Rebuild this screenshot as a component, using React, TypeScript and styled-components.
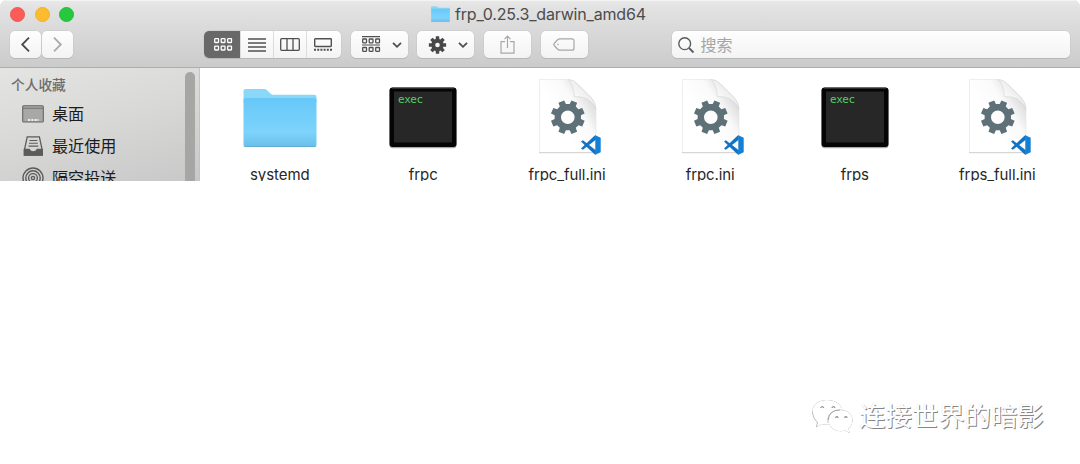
import React from 'react';
import styled, { createGlobalStyle } from 'styled-components';

const GlobalStyle = createGlobalStyle`
  * { box-sizing: border-box; }
  body { margin: 0; background: #fff; }
  svg { display: block; flex: none; overflow: visible; }
`;

const Page = styled.main`
  position: relative;
  width: 1080px;
  height: 464px;
  overflow: hidden;
  background: #fff;
  font-family: Inter, 'Noto Sans CJK SC', sans-serif;
`;
const Window = styled.section`
  height: 181px;
  overflow: hidden;
  border-radius: 6px 6px 0 0;
`;
const Header = styled.header`
  height: 68px;
  background: linear-gradient(#e9e9e9, #e2e2e2 8px, #cbcbcb);
  border-bottom: 1px solid #aeaeae;
  box-shadow: inset 0 1px #f3f3f3;
`;
const TitleBar = styled.div`
  display: grid;
  grid-template-columns: 431px 1fr;
  align-items: center;
  height: 31px;
  padding-bottom: 3px;
`;
const Lights = styled.div`
  display: flex;
  gap: 9.5px;
  padding-left: 10px;
`;
const Light = styled.i<{ $color: string; $edge: string }>`
  width: 15px;
  height: 15px;
  border-radius: 50%;
  background: ${p => p.$color};
  border: 1px solid ${p => p.$edge};
`;
const Title = styled.div`
  display: flex;
  align-items: center;
  gap: 5px;
  color: #4c4c4c;
  font-size: 16px;
  line-height: 20px;
  white-space: nowrap;
`;
const TitleText = styled.span`
  letter-spacing: -0.18px;
`;
const Toolbar = styled.div`
  display: flex;
  height: 27px;
  padding-left: 10px;
`;
const Button = styled.div<{ $w: number; $ml?: number }>`
  display: flex;
  align-items: center;
  justify-content: center;
  flex: none;
  width: ${p => p.$w}px;
  height: 27px;
  margin-left: ${p => p.$ml ?? 0}px;
  border-radius: 5px;
  background: linear-gradient(#fefefe, #f3f3f3);
  box-shadow: 0 0 0 0.5px #c6c6c6, 0 1px 0.5px #aaa;
`;
const MenuButton = styled(Button)`
  gap: 12px;
  padding-left: 5px;
`;
const Segments = styled(Button)`
  justify-content: flex-start;
  overflow: hidden;
`;
const Segment = styled.div<{ $w: number; $on?: boolean }>`
  display: flex;
  align-items: center;
  justify-content: center;
  width: ${p => p.$w}px;
  height: 27px;
  padding-left: ${p => (p.$on ? '2px' : '0')};
  background: ${p => (p.$on ? '#686868' : 'transparent')};
  border-left: ${p => (p.$on ? '0' : '1px solid #dcdcdc')};
`;
const Search = styled(Button)`
  justify-content: flex-start;
  gap: 7px;
  padding-left: 6px;
  color: #a5a5a5;
  font-size: 16px;
  line-height: 24px;
`;
const Body = styled.div`
  display: flex;
  height: 113px;
`;
const Sidebar = styled.aside`
  display: flex;
  justify-content: space-between;
  width: 200px;
  padding: 4px 4px 0 0;
  background: linear-gradient(165deg, #e4e4e2, #d9d9d8 45%, #c8c8c8);
  border-right: 1px solid #c4c4c4;
`;
const Heading = styled.h2`
  margin: 0 0 0 11px;
  color: #6c6c6c;
  font-size: 13.7px;
  font-weight: 500;
  line-height: 26px;
`;
const SideItem = styled.div`
  display: flex;
  align-items: center;
  height: 32px;
  padding-left: 22px;
  gap: 8px;
  color: #1c1c1c;
  font-size: 16.1px;
  font-weight: 400;
  line-height: 24px;
`;
const Scroll = styled.div`
  width: 10px;
  height: 130px;
  border-radius: 5px;
  background: #a6a6a5;
`;
const Files = styled.div`
  display: grid;
  grid-template-columns: 143.6px 143.2px 144.4px 142px 147.2px 138px;
  padding-left: 8px;
`;
const File = styled.figure`
  display: flex;
  flex-direction: column;
  align-items: center;
  margin: 0;
  padding-top: 9px;
`;
const FileName = styled.figcaption`
  margin-top: 8px;
  color: #272727;
  font-size: 15px;
  line-height: 20px;
  letter-spacing: -0.08px;
  white-space: nowrap;
`;
const Watermark = styled.div`
  position: absolute;
  left: 811px;
  top: 396px;
  display: flex;
  align-items: center;
  gap: 6px;
  color: #fff;
  font-size: 26.4px;
  line-height: 40px;
  white-space: nowrap;
  text-shadow: 1px 1px 0.6px #858585, 0 0 1px #ddd;
`;

const gearPath = (cx: number, cy: number, outer: number, inner: number, hole: number, wide: number, tip: number, offset = 0) => {
  const pts: string[] = [];
  const at = (r: number, a: number) => `${(cx + r * Math.cos(a)).toFixed(2)} ${(cy + r * Math.sin(a)).toFixed(2)}`;
  for (let i = 0; i < 8; i++) {
    const a = (i * Math.PI) / 4 + offset;
    pts.push(at(inner, a - wide), at(outer, a - tip), at(outer, a + tip), at(inner, a + wide));
  }
  return `M${pts.join('L')}ZM${cx + hole} ${cy}A${hole} ${hole} 0 1 0 ${cx - hole} ${cy}A${hole} ${hole} 0 1 0 ${cx + hole} ${cy}Z`;
};

const Chevron = () => (
  <svg width="10" height="6" viewBox="0 0 10 6" fill="none" stroke="#4d4d4d" strokeWidth="1.8"><path d="M1 .8 5 4.8 9 .8" /></svg>
);
const Arrow = ({ forward }: { forward?: boolean }) => (
  <svg width="9" height="15" viewBox="0 0 9 15" fill="none" stroke={forward ? '#aaa' : '#484848'} strokeWidth="1.8">
    <path d={forward ? 'M1 .7 7.8 7.5 1 14.3' : 'M8 .7 1.2 7.5 8 14.3'} />
  </svg>
);
const Squares = ({ y, color }: { y: number; color: string }) => (
  <g fill="none" stroke={color} strokeWidth="1.3">
    {[0.7, 7.2, 13.7].map(x => <rect key={x} x={x} y={y} width="3.8" height="3.8" rx=".5" />)}
  </g>
);
const FolderIcon = ({ width, height, id }: { width: number; height: number; id: string }) => (
  <svg width={width} height={height} viewBox="0 0 74 60" preserveAspectRatio="none">
    <defs>
      <linearGradient id={id} x2="0" y2="1">
        <stop stopColor="#67c8f8" /><stop offset=".7" stopColor="#7dd3fc" /><stop offset="1" stopColor="#69bfe9" />
      </linearGradient>
    </defs>
    <path d="M.5 12V3q0-2 2-2h18.500q2 0 3.300 1.400L28 6q.8.8 2 .8h41.500q2 0 2 2V14H.5Z" fill="#8ad7f8" />
    <path d="M.5 12q0-2 2-2h69q2 0 2 2v45q0 2-2 2h-69q-2 0-2-2Z" fill={`url(#${id})`} />
    <path d="M1.500 58.500h71" stroke="#64aed4" strokeWidth="1" />
  </svg>
);
const ExecText = styled.text`
  font: 11px 'DejaVu Sans Mono', monospace;
  fill: #4fd266;
`;
const ExecIcon = () => (
  <svg width="74" height="80" viewBox="0 0 74 80">
    <rect x="3.500" y="11" width="67" height="60.300" rx="3.500" fill="#aaa" />
    <rect x="3.500" y="10.500" width="67" height="59.500" rx="3" fill="#050505" />
    <path d="M6 11h62" stroke="#555" strokeWidth="1" />
    <rect x="8" y="14.500" width="58" height="51" fill="#272727" />
    <ExecText x="12" y="25.500" textLength="25">exec</ExecText>
  </svg>
);
const IniIcon = ({ id }: { id: string }) => (
  <svg width="74" height="80" viewBox="0 0 74 80">
    <defs>
      <linearGradient id={`${id}-page`} x1=".3" y1=".5" x2=".85" y2=".05">
        <stop stopColor="#fff" /><stop offset=".5" stopColor="#fafafa" /><stop offset=".85" stopColor="#dedede" /><stop offset="1" stopColor="#e8e8e8" />
      </linearGradient>
      <linearGradient id={`${id}-fold`} x1=".1" y1=".95" x2=".65" y2=".4">
        <stop stopColor="#d6d6d6" /><stop offset=".35" stopColor="#fdfdfd" /><stop offset="1" stopColor="#ececec" />
      </linearGradient>
    </defs>
    <path d="M9.500 2.500H38Q43 2.500 47.500 7L61 20.500Q65.500 25 66 32V75.500H9.500Z" fill={`url(#${id}-page)`} stroke="#e6e6e6" strokeWidth=".7" />
    <path d="M9 75.700H65.500" stroke="#d0d0d0" strokeWidth="1" />
    <path d="M38 2.500Q43 6 44.500 19.500Q60 19 66 32Q65.500 25 61 20.500L47.500 7Q43 2.500 38 2.500Z" fill={`url(#${id}-fold)`} stroke="#d4d4d4" strokeWidth=".6" />
    <path d={gearPath(37.8, 40.2, 17.2, 13.3, 6.8, 0.25, 0.18, Math.PI / 8)} fill="#5f7178" fillRule="evenodd" />
    <path d="M51 64.600 52.900 63.200 65.800 73.200V77.800L64.500 77.300Z" fill="#1272c4" />
    <path d="M51 71.400 52.900 72.800 65.800 62.800V58.200L64.500 58.700Z" fill="#1272c4" />
    <path d="M65.300 58.300 70.700 60.800V75.200L65.300 77.700Z" fill="#1480d3" />
  </svg>
);
const DesktopIcon = () => (
  <svg width="22" height="18" viewBox="0 0 22 18">
    <rect x=".7" y=".8" width="20.600" height="16.200" rx="1" fill="#a8a8a8" stroke="#666" strokeWidth="1.1" />
    <path d="M1 3.200h20" stroke="#707070" strokeWidth="1.1" />
    <path d="M6 15h2.200m1.100 0h2.200m1.100 0h2.200m.8 0h1" stroke="#eee" strokeWidth="2.200" />
  </svg>
);
const TrayIcon = () => (
  <svg width="22" height="20" viewBox="0 0 22 20" stroke="#5c5c5c" strokeWidth="1.3">
    <path d="M5.200.8h12.200L20.200 14v5H2.400v-5Z" fill="#d6d6d6" />
    <path d="M7.500 4.500h7.800M7 7.300h8.800M6.500 10.100h9.800" fill="none" strokeWidth="1.1" />
    <path d="M2.400 13.500h4.800q1 2.500 4 2.500t4-2.500h5V19H2.400Z" fill="#5c5c5c" />
  </svg>
);
const AirDropIcon = () => (
  <svg width="22" height="22" viewBox="0 0 22 22" fill="none" stroke="#5c5c5c" strokeWidth="1.400">
    <circle cx="11" cy="11" r="10" /><circle cx="11" cy="11" r="7.200" /><circle cx="11" cy="11" r="4.400" /><circle cx="11" cy="11" r="1.600" />
  </svg>
);
const BubbleGroup = styled.g`
  filter: drop-shadow(0.9px 0.9px 0.4px #757575);
`;
const WeChatIcon = () => (
  <svg width="42" height="38" viewBox="0 0 42 36.500" preserveAspectRatio="none">
    <BubbleGroup>
      <path d="M1.500 14C1.500 7 8 3 16 3 24 3 30 7 31.500 12.500 24 12 16.500 16 16.500 22 16.500 24 17 25.500 17.500 26.500 15 27 13 26.500 10.500 26L5.500 29 6.500 24.500C3.500 22 1.500 18.500 1.500 14Z" fill="#fff" />
    </BubbleGroup>
    <BubbleGroup>
      <path d="M17.500 22C17.500 16 23 12.500 29.500 12.500 36.500 12.500 41.500 16.500 41.500 22 41.500 26 40 28.500 37.500 30L38.500 34.500 34 32.200C26 34.500 17.500 30 17.500 22Z" fill="#fff" />
    </BubbleGroup>
    <g fill="none" stroke="#909090" strokeWidth="1.100">
      <path d="M1.300 14Q1.300 19.500 6.300 24.500L5.300 29" stroke="#b0b0b0" strokeWidth=".7" />
      <path d="M17.300 22Q17.500 12.500 29.500 12.300" stroke="#999" strokeWidth=".9" />
      <path d="M9.500 10.500q1.700-2.500 3.400 0M20.700 10.500q1.700-2.500 3.400 0M24.500 20q1.400-2.200 2.800 0M33.500 20q1.400-2.200 2.800 0" />
    </g>
  </svg>
);

const files = [
  { name: 'systemd', kind: 'folder' },
  { name: 'frpc', kind: 'exec' },
  { name: 'frpc_full.ini', kind: 'ini' },
  { name: 'frpc.ini', kind: 'ini' },
  { name: 'frps', kind: 'exec' },
  { name: 'frps_full.ini', kind: 'ini' },
];
const FolderBox = styled.div`
  padding: 11px 0 9px;
`;

export default function App() {
  return (
    <Page>
      <GlobalStyle />
      <Window>
        <Header>
          <TitleBar>
            <Lights>
              <Light $color="#fc5b57" $edge="#f2544f" />
              <Light $color="#fdbc2e" $edge="#f0b02f" />
              <Light $color="#27c840" $edge="#23bd3a" />
            </Lights>
            <Title><FolderIcon width={19} height={16} id="title-folder" /><TitleText>frp_0.25.3_darwin_amd64</TitleText></Title>
          </TitleBar>
          <Toolbar>
            <Button $w={31}><Arrow /></Button>
            <Button $w={31} $ml={1}><Arrow forward /></Button>
            <Segments $w={136.500} $ml={131}>
              <Segment $w={36} $on><svg width="18" height="13"><Squares y={0.7} color="#fff" /><Squares y={8.2} color="#fff" /></svg></Segment>
              <Segment $w={33}><svg width="18" height="14" stroke="#505050" strokeWidth="1.300"><path d="M0 1h18M0 5h18M0 9h18M0 13h18" /></svg></Segment>
              <Segment $w={33}><svg width="20" height="13" fill="none" stroke="#505050" strokeWidth="1.300"><rect x=".7" y=".7" width="18.600" height="11.600" rx="1" /><path d="M7 1v11M13 1v11" /></svg></Segment>
              <Segment $w={33.500}><svg width="18" height="13" fill="none" stroke="#505050" strokeWidth="1.400"><rect x=".7" y=".7" width="16.600" height="7.800" rx=".7" /><path d="M0 11.800h18" strokeWidth="2" strokeDasharray="2 1.200" /></svg></Segment>
            </Segments>
            <MenuButton $w={57} $ml={10}>
              <svg width="18" height="17"><path d="M0 .7h18M0 9h18" stroke="#505050" strokeWidth="1.200" /><Squares y={3} color="#505050" /><Squares y={11.500} color="#505050" /></svg>
              <Chevron />
            </MenuButton>
            <MenuButton $w={57} $ml={9.500}>
              <svg width="18" height="18"><path d={gearPath(9.5, 9, 8.8, 6.2, 2.3, 0.3, 0.19)} fill="#484848" fillRule="evenodd" /></svg>
              <Chevron />
            </MenuButton>
            <Button $w={47} $ml={9.500}>
              <svg width="15" height="19" viewBox="0 0 15 19" fill="none" stroke="#a8a8a8" strokeWidth="1.200"><path d="M5 6.700H1v11.500h13V6.700h-4M7.500 13V1.200M4.500 4.200l3-3 3 3" /></svg>
            </Button>
            <Button $w={47} $ml={10}>
              <svg width="22" height="13" viewBox="0 0 22 13" fill="none" stroke="#a8a8a8" strokeWidth="1.200"><path d="M7 .8h12q2 0 2 2v7.400q0 2-2 2H7Q5.500 12.200 4.400 11L1.200 7.500q-.9-1 0-2L4.400 2Q5.500.8 7 .8Z" /><circle cx="5" cy="6.500" r=".8" fill="#a8a8a8" stroke="none" /></svg>
            </Button>
            <Search $w={398.500} $ml={84}>
              <svg width="16" height="16" viewBox="0 0 16 16" fill="none" stroke="#5b5b5b" strokeWidth="1.400"><circle cx="6.700" cy="6.700" r="5.900" /><path d="m11 11 4.500 4.500" strokeWidth="1.800" /></svg>
              搜索
            </Search>
          </Toolbar>
        </Header>
        <Body>
          <Sidebar>
            <div>
              <Heading>个人收藏</Heading>
              <SideItem><DesktopIcon />桌面</SideItem>
              <SideItem><TrayIcon />最近使用</SideItem>
              <SideItem><AirDropIcon />隔空投送</SideItem>
            </div>
            <Scroll />
          </Sidebar>
          <Files>
            {files.map((f, i) => (
              <File key={f.name}>
                {f.kind === 'folder' && <FolderBox><FolderIcon width={74} height={60} id="folder" /></FolderBox>}
                {f.kind === 'exec' && <ExecIcon />}
                {f.kind === 'ini' && <IniIcon id={`ini${i}`} />}
                <FileName>{f.name}</FileName>
              </File>
            ))}
          </Files>
        </Body>
      </Window>
      <Watermark><WeChatIcon />连接世界的暗影</Watermark>
    </Page>
  );
}
